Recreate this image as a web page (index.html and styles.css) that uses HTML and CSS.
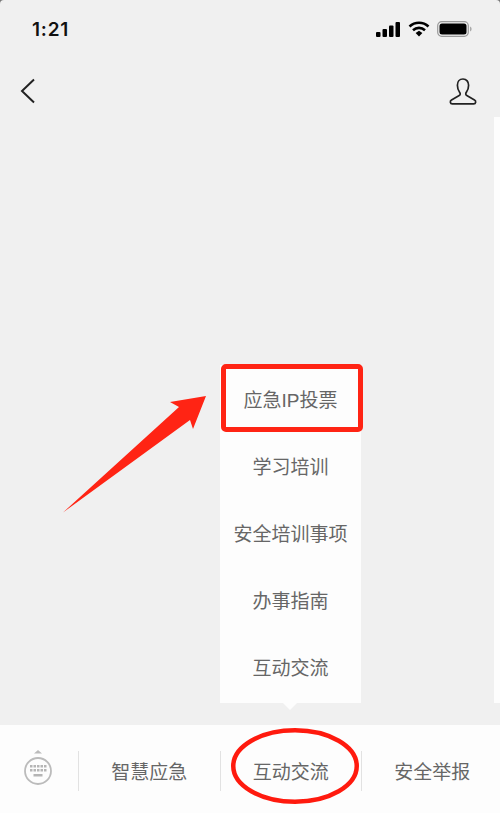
FILE: index.html
```html
<!DOCTYPE html>
<html lang="zh-CN">
<head>
    <meta charset="UTF-8">
    <title>互动交流</title>
    <link rel="stylesheet" href="styles.css">
</head>
<body>
<div class="phone">
    <div class="status-bar">
        <span class="time">1:21</span>
        <div class="status-icons">
            <svg width="25" height="15" viewBox="0 0 25 15"><rect x="0" y="10" width="4.5" height="5" rx="1"/><rect x="6.5" y="7" width="4.5" height="8" rx="1"/><rect x="13" y="3.5" width="4.5" height="11.5" rx="1"/><rect x="19.5" y="0" width="4.5" height="15" rx="1"/></svg>
            <svg width="22" height="16" viewBox="0 0 22 16"><path d="M1.5 5.5a14 14 0 0 1 19 0" fill="none" stroke="#000" stroke-width="2.6"/><path d="M5 9.2a9 9 0 0 1 12 0" fill="none" stroke="#000" stroke-width="2.6"/><path d="M7.6 12l3.4-2.2L14.4 12 11 15.6z"/></svg>
            <svg width="35" height="16" viewBox="0 0 35 16"><rect x="0.7" y="0.7" width="30.6" height="14.6" rx="4" fill="none" stroke="#999" stroke-width="1.2"/><rect x="2.5" y="2.5" width="27" height="11" rx="2.5"/><path d="M33 5.5c1.2.4 1.6 1.4 1.6 2.5s-.4 2.100-1.600 2.500z" fill="#aaa"/></svg>
        </div>
    </div>

    <div class="nav-bar">
        <svg class="nav-back" width="16" height="26" viewBox="0 0 16 26"><path d="M14 1.500 2 13l12 11.500" fill="none" stroke="#222" stroke-width="2"/></svg>
        <svg class="nav-user" width="28" height="27" viewBox="0 0 28 27"><path d="M14 1c-3.600 0-5.600 2.800-5.600 6.300 0 2.900 1 5.400 2.300 7.100.8 1 .7 2.500-.5 3.100L2.500 22c-1.800 1-1.500 3.800.8 3.800h21.400c2.300 0 2.600-2.800.8-3.800l-7.700-4.500c-1.200-.6-1.300-2.100-.5-3.100 1.300-1.700 2.300-4.200 2.300-7.100C19.600 3.800 17.600 1 14 1z" fill="none" stroke="#222" stroke-width="1.700"/></svg>
    </div>

    <div class="content">
        <div class="side-strip"></div>
    </div>

    <div class="tab-bar">
        <div class="tab tab-keyboard">
            <svg width="30" height="36" viewBox="0 0 30 36">
                <path d="M15 0l4 3.500h-8z" fill="#bbb"/>
                <circle cx="15" cy="21" r="13" fill="none" stroke="#bbb" stroke-width="1.800"/>
                <g fill="#b5b5b5">
                    <rect x="7" y="15" width="2.500" height="2.500"/><rect x="10.500" y="15" width="2.500" height="2.500"/><rect x="14" y="15" width="2.500" height="2.500"/><rect x="17.500" y="15" width="2.500" height="2.500"/><rect x="21" y="15" width="2.500" height="2.500"/>
                    <rect x="7" y="19" width="2.500" height="2.500"/><rect x="10.500" y="19" width="2.500" height="2.500"/><rect x="14" y="19" width="2.500" height="2.500"/><rect x="17.500" y="19" width="2.500" height="2.500"/><rect x="21" y="19" width="2.500" height="2.500"/>
                    <rect x="10.500" y="24" width="9" height="2.500"/>
                </g>
            </svg>
        </div>
        <div class="tab">智慧应急</div>
        <div class="tab">互动交流</div>
        <div class="tab">安全举报</div>
    </div>

    <div class="popup-menu">
        <div class="menu-item">应急IP投票</div>
        <div class="menu-item">学习培训</div>
        <div class="menu-item">安全培训事项</div>
        <div class="menu-item">办事指南</div>
        <div class="menu-item">互动交流</div>
    </div>

    <!-- red markup drawn over the screenshot -->
    <div class="mark-box"></div>
    <svg class="mark-arrow" width="150" height="125" viewBox="0 0 150 125"><path d="M0 120.500 116 15 107 10 143 4 130 37 127 28z" fill="#ff2414"/></svg>
    <svg class="mark-ring" width="132" height="78" viewBox="0 0 132 78"><ellipse cx="66" cy="39" rx="61.750" ry="35.750" fill="none" stroke="#ff1a0e" stroke-width="4.500"/></svg>
</div>
</body>
</html>
```

FILE: styles.css
```css
* {
    box-sizing: border-box;
}
body {
    margin: 0;
    background-color: #777;
    font-family: "Liberation Sans", "Noto Sans CJK SC", sans-serif;
    overflow: hidden;
}
.phone {
    position: relative;
    display: flex;
    flex-direction: column;
    width: 500px;
    height: 813px;
    background-color: #f0f0f0;
    border-radius: 4px 4px 0 0;
}
.status-bar {
    display: flex;
    align-items: center;
    justify-content: space-between;
    height: 58px;
    padding: 0 28px 0 32px;
}
.time {
    font-family: Inter, "Liberation Sans", sans-serif;
    font-size: 19px;
    font-weight: 600;
    letter-spacing: 0.8px;
    color: #111;
}
.status-icons {
    display: flex;
    align-items: center;
    gap: 7px;
}
.nav-bar {
    display: flex;
    align-items: center;
    justify-content: space-between;
    height: 59px;
    padding: 7px 23px 0 20px;
}
.content {
    flex: 1;
    display: flex;
    justify-content: flex-end;
    padding-bottom: 22px;
}
.side-strip {
    width: 6px;
    background-color: #fdfdfd;
}
.tab-bar {
    display: flex;
    align-items: center;
    height: 88px;
    background-color: #fdfdfd;
}
.tab {
    flex: none;
    display: flex;
    align-items: center;
    justify-content: center;
    width: 141.500px;
    height: 40px;
    margin-top: 3px;
    border-left: 1px solid #e2e2e2;
    font-size: 19px;
    color: #666;
}
.tab-keyboard {
    width: 78px;
    border-left: none;
    margin-top: -3px;
    padding-right: 2px;
}
.popup-menu {
    position: absolute;
    left: 220px;
    top: 365px;
    width: 141px;
    height: 338px;
    padding-bottom: 3px;
    background-color: #fdfdfd;
}
.popup-menu::after {
    content: "";
    position: absolute;
    left: 63px;
    bottom: -7px;
    border-left: 7px solid transparent;
    border-right: 7px solid transparent;
    border-top: 7px solid #fdfdfd;
}
.menu-item {
    display: flex;
    align-items: center;
    justify-content: center;
    height: 67px;
    font-size: 19px;
    color: #666;
}
.mark-box {
    position: absolute;
    left: 221px;
    top: 364px;
    width: 142px;
    height: 68px;
    border: 5px solid #ff2414;
    border-radius: 5px;
}
.mark-arrow {
    position: absolute;
    left: 63px;
    top: 392px;
}
.mark-ring {
    position: absolute;
    left: 229px;
    top: 727px;
}
```
